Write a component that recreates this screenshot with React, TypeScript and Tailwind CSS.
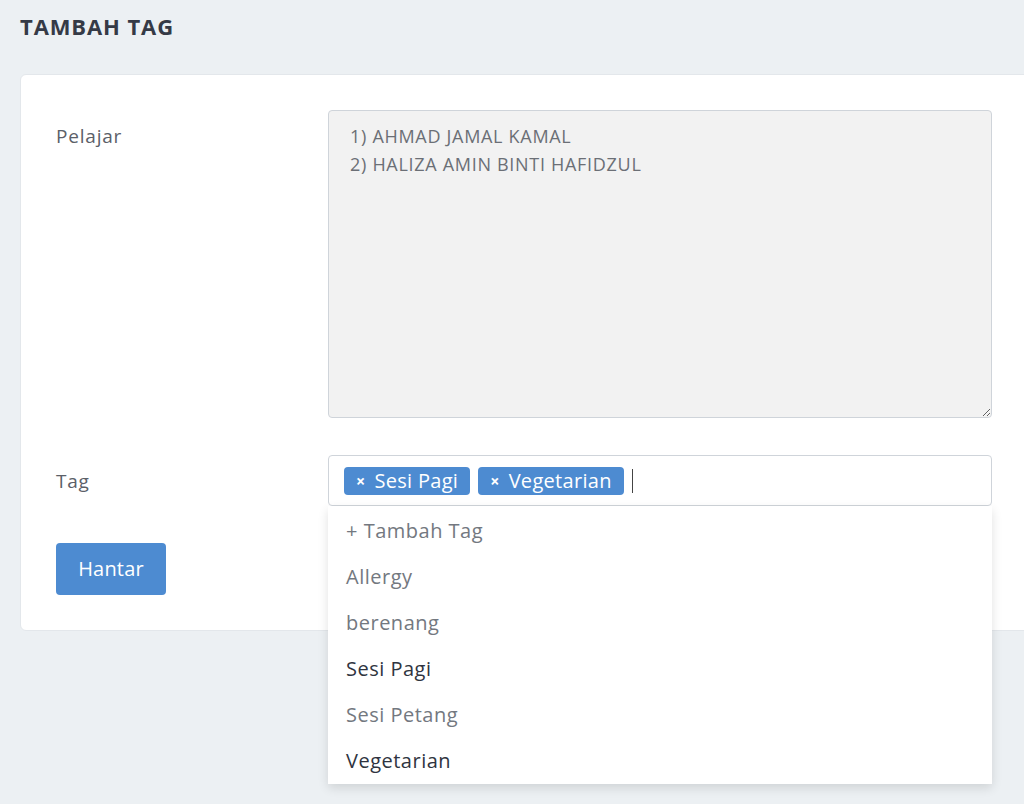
import React from "react";

const students = "1) AHMAD JAMAL KAMAL\n2) HALIZA AMIN BINTI HAFIDZUL";

const options = [
  { label: "+ Tambah Tag", selected: false },
  { label: "Allergy", selected: false },
  { label: "berenang", selected: false },
  { label: "Sesi Pagi", selected: true },
  { label: "Sesi Petang", selected: false },
  { label: "Vegetarian", selected: true },
];

const Chip = ({ text }: { text: string }) => (
  <span className="flex items-center gap-[9px] h-[28px] px-[12px] rounded-[4px] bg-[#4d8bd1] text-white text-[20px] tracking-[0.3px] leading-none">
    <span className="text-[16px] font-bold">×</span>
    {text}
  </span>
);

export default function App() {
  return (
    <div
      className="min-h-[804px] bg-[#ecf0f3] overflow-hidden pl-5 pt-[12px]"
      style={{ fontFamily: '"Open Sans", "Noto Sans", sans-serif' }}
    >
      <h1 className="text-[22px] font-bold tracking-[0.9px] text-[#353a46] leading-[28px]">TAMBAH TAG</h1>
      <div className="mt-[34px] w-[1010px] bg-white rounded-[6px] border border-[#e3e7eb] pl-[35px] pr-[36px] pt-[35px] pb-[35px]">
        <div className="grid grid-cols-[272px_664px] gap-y-[37px]">
          <div className="text-[19px] tracking-[0.8px] text-[#5b6068] pt-[12px]">Pelajar</div>
          <textarea
            readOnly
            defaultValue={students}
            className="h-[308px] w-full rounded-[4px] border border-[#cfd4da] bg-[#f2f2f2] px-[21px] py-[11px] text-[18px] tracking-[0.7px] leading-[28px] text-[#6b6f76] outline-none"
            style={{ fontFamily: '"Open Sans", "Noto Sans", sans-serif' }}
          />

          <div className="text-[19px] tracking-[0.8px] text-[#5b6068] pt-[12px]">Tag</div>
          <div className="relative">
            <div className="h-[51px] rounded-[4px] border border-[#cfd4da] bg-white flex items-center gap-[8px] px-[15px]">
              <Chip text="Sesi Pagi" />
              <Chip text="Vegetarian" />
              <span className="w-px h-[24px] bg-[#444]" />
            </div>
            <div className="absolute left-0 right-0 top-[51px] z-10 bg-white pb-[2px] shadow-[0_4px_10px_rgba(0,0,0,0.12)]">
              {options.map((o) => (
                <div
                  key={o.label}
                  className={`h-[46px] flex items-center px-[18px] pt-[3px] text-[20px] tracking-[0.5px] ${
                    o.selected ? "text-[#2f3440]" : "text-[#737880]"
                  }`}
                >
                  {o.label}
                </div>
              ))}
            </div>
          </div>

          <div>
            <button className="h-[52px] w-[110px] rounded-[4px] bg-[#4d8bd1] text-white text-[20px] tracking-[0.2px]">
              Hantar
            </button>
          </div>
          <div />
        </div>
      </div>
    </div>
  );
}
